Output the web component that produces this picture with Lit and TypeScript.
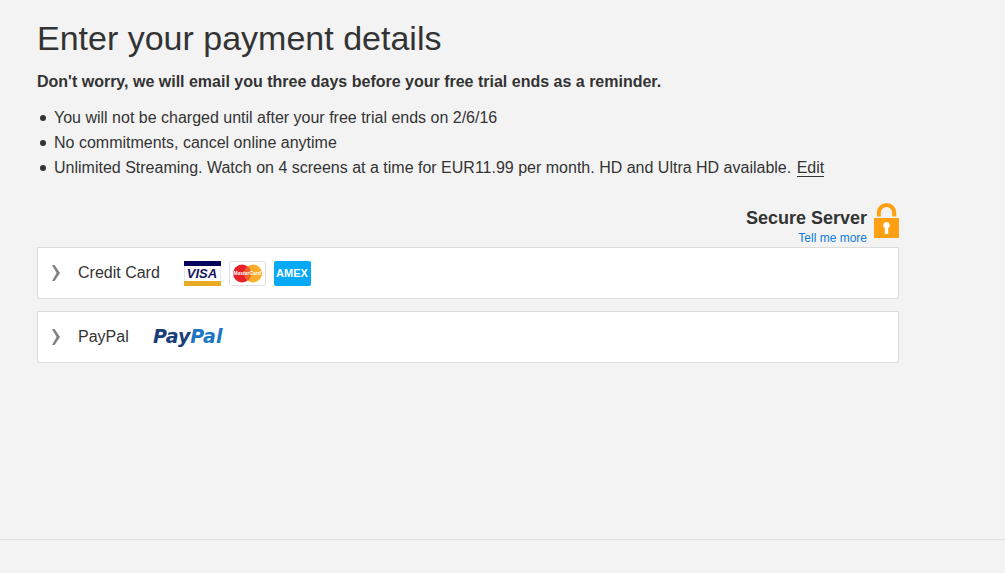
import { LitElement, html, svg, css } from "lit";
import { customElement, property } from "lit/decorators.js";

const visa = svg`<svg class="card" viewBox="0 0 37 25" role="img" aria-label="Visa">
  <rect width="37" height="25" rx="1" fill="#fff"/>
  <rect width="37" height="5" fill="#04045c"/>
  <rect y="20" width="37" height="5" fill="#e9ab24"/>
  <path d="M.5 5v15M36.5 5v15" stroke="#e4e4ec"/>
  <text x="18" y="17" text-anchor="middle" font-family="Liberation Sans, sans-serif" font-size="13" font-weight="700" font-style="italic" fill="#15155f">VISA</text>
</svg>`;

const masterCard = svg`<svg class="card" viewBox="0 0 37 25" role="img" aria-label="MasterCard">
  <rect x=".5" y=".5" width="36" height="24" rx="2" fill="#fff" stroke="#dedee4"/>
  <circle cx="24" cy="12.5" r="9" fill="#fbae2c"/>
  <circle cx="13" cy="12.5" r="9" fill="#e8202a"/>
  <path d="M18.5 5.4a9 9 0 0 1 0 14.2a9 9 0 0 1 0-14.2z" fill="#f0622a"/>
  <text x="18" y="14" text-anchor="middle" font-family="Liberation Sans, sans-serif" font-size="5" font-weight="700" font-style="italic" fill="#fff">MasterCard</text>
</svg>`;

const amex = svg`<svg class="card" viewBox="0 0 37 25" role="img" aria-label="American Express">
  <rect width="37" height="25" rx="2" fill="#05a9f4"/>
  <text x="18" y="16" text-anchor="middle" font-family="Liberation Sans, sans-serif" font-size="11" font-weight="700" fill="#fff">AMEX</text>
</svg>`;

const payPal = svg`<svg class="paypal" viewBox="0 0 76 32" role="img" aria-label="PayPal">
  <text x="0" y="22" font-family="DejaVu Sans, sans-serif" font-size="19" font-weight="700" font-style="italic" fill="#1b3d78">Pay<tspan fill="#1c77c3">Pal</tspan></text>
</svg>`;

@customElement("payment-option")
class PaymentOption extends LitElement {
  @property() label = "";

  static styles = css`
    :host { display: block; }
    .option {
      display: flex;
      align-items: center;
      box-sizing: border-box;
      width: 100%;
      min-height: 52px;
      padding: 0 14px;
      border: 1px solid #dcdcdc;
      border-radius: 0;
      background: #fff;
      color: #333;
      font: 16px/24px "Liberation Sans", Arial, sans-serif;
      text-align: left;
      cursor: pointer;
    }
    .chevron { width: 8px; height: 16px; margin-right: 18px; }
    .logos { display: flex; align-items: center; gap: 8px; margin-left: 24px; }
  `;

  render() {
    return html`<button class="option" type="button" aria-expanded="false">
      <svg class="chevron" viewBox="0 0 8 16" aria-hidden="true">
        <path d="M0 0h2.6L8 8l-5.4 8H0l4.6-8z" fill="#808080"/>
      </svg>
      <span>${this.label}</span>
      <span class="logos"><slot></slot></span>
    </button>`;
  }
}

@customElement("app-root")
class AppRoot extends LitElement {
  static styles = css`
    :host {
      display: flex;
      flex-direction: column;
      min-height: 100vh;
      background: #f3f3f3;
      color: #333;
      font: 16px/25px "Liberation Sans", Arial, sans-serif;
    }
    .content {
      flex: 1;
      box-sizing: border-box;
      width: 100%;
      max-width: 936px;
      padding: 17px 37px 24px;
    }
    .title { margin: 0; font-size: 34px; line-height: 42px; font-weight: 400; }
    .reminder { margin: 10px 0 11px; font-weight: 700; }
    .terms { margin: 0; padding: 0; list-style: none; }
    .term { display: flex; align-items: flex-start; gap: 8px; }
    .term::before {
      content: "";
      flex: none;
      width: 6px;
      height: 6px;
      margin: 10px 0 0 3px;
      border-radius: 50%;
      background: #333;
    }
    .edit { margin-left: 1px; color: #333; text-decoration: none; border-bottom: 1px solid #333; }
    .secure { display: flex; justify-content: flex-end; gap: 7px; margin-top: 23px; }
    .secure-text { display: flex; flex-direction: column; align-items: flex-end; padding-top: 4px; }
    .secure-name { font-size: 18px; line-height: 22px; font-weight: 700; }
    .more { color: #0f7be0; font-size: 12px; line-height: 18px; text-decoration: none; }
    .lock { width: 25px; height: 35px; }
    .options { display: grid; gap: 12px; }
    .card { display: block; width: 37px; height: 25px; }
    .paypal { display: block; width: 76px; height: 32px; }
    .footer { height: 33px; border-top: 1px solid #dfdfdf; }
  `;

  render() {
    return html`
      <main class="content">
        <h1 class="title">Enter your payment details</h1>
        <p class="reminder">Don't worry, we will email you three days before your free trial ends as a reminder.</p>
        <ul class="terms">
          <li class="term"><span>You will not be charged until after your free trial ends on 2/6/16</span></li>
          <li class="term"><span>No commitments, cancel online anytime</span></li>
          <li class="term"><span>Unlimited Streaming. Watch on 4 screens at a time for EUR11.99 per month. HD and Ultra HD available. <a class="edit" href="#plan">Edit</a></span></li>
        </ul>
        <div class="secure">
          <div class="secure-text">
            <span class="secure-name">Secure Server</span>
            <a class="more" href="#secure">Tell me more</a>
          </div>
          <svg class="lock" viewBox="0 0 25 35" aria-hidden="true">
            <path d="M4.8 13.5V9.7a7.7 7.7 0 0 1 15.4 0v3.8" fill="none" stroke="#ff9f12" stroke-width="4"/>
            <rect y="15" width="25" height="20" fill="#ff9f12"/>
            <path d="M12.5 19a3.3 3.3 0 0 1 1.7 6.1V31h-3.4v-5.9A3.3 3.3 0 0 1 12.5 19z" fill="#fff"/>
          </svg>
        </div>
        <div class="options">
          <payment-option label="Credit Card">${visa}${masterCard}${amex}</payment-option>
          <payment-option label="PayPal">${payPal}</payment-option>
        </div>
      </main>
      <footer class="footer"></footer>
    `;
  }
}
